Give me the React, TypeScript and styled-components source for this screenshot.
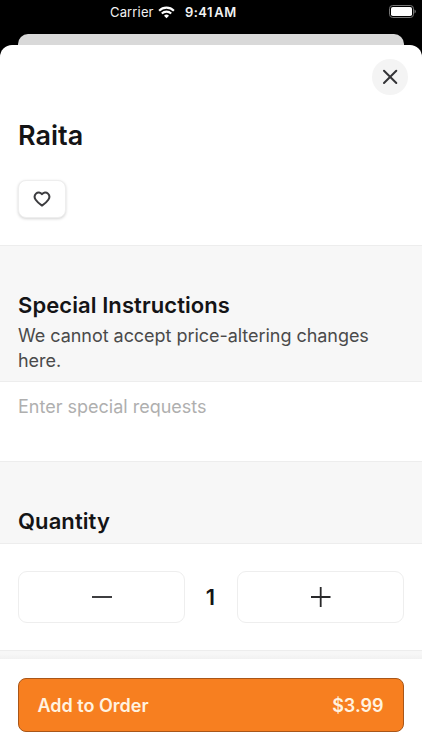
import React from "react";
import styled, { createGlobalStyle } from "styled-components";

const GlobalStyle = createGlobalStyle`
  * { box-sizing: border-box; }
  body {
    margin: 0;
    background: #000;
    font-family: Inter, "Liberation Sans", sans-serif;
    color: #141416;
  }
  button { font: inherit; color: inherit; margin: 0; padding: 0; }
  svg { display: block; flex: none; }
  h1, h2, p { margin: 0; }
`;

const Screen = styled.div`
  width: 422px;
  height: 750px;
  display: flex;
  flex-direction: column;
  background: #000;
  overflow: hidden;
`;

const StatusBar = styled.header`
  height: 34px;
  flex: none;
  display: flex;
  justify-content: space-between;
  padding: 4px 6px 0 110px;
  color: #f2f2f2;
  font-size: 13px;
  line-height: 16px;
`;

const StatusGroup = styled.div`
  display: flex;
  height: 16px;
  align-items: center;
`;

const Carrier = styled.span`
  width: 48px;
  letter-spacing: 0.15px;
  white-space: nowrap;
`;

const Clock = styled.span`
  margin-left: 10px;
  font-weight: 600;
  letter-spacing: 0.45px;
  word-spacing: -2.5px;
  white-space: nowrap;
`;

const PreviousSheet = styled.div`
  height: 11px;
  flex: none;
  margin: 0 18px;
  background: #d9d9d9;
  border-radius: 10px 10px 0 0;
`;

const Sheet = styled.main`
  flex: 1;
  display: flex;
  flex-direction: column;
  background: #fff;
  border-radius: 12px 12px 0 0;
`;

const Intro = styled.section`
  height: 200px;
  padding: 14px 14px 0 18px;
`;

const CloseButton = styled.button`
  display: flex;
  width: 36px;
  height: 36px;
  margin-left: auto;
  align-items: center;
  justify-content: center;
  border: 0;
  border-radius: 50%;
  background: #f4f4f4;
`;

const Title = styled.h1`
  margin-top: 24px;
  font-size: 27px;
  line-height: 34px;
  font-weight: 600;
`;

const FavoriteButton = styled.button`
  display: flex;
  width: 48px;
  height: 38px;
  margin-top: 27px;
  align-items: center;
  justify-content: center;
  border: 1px solid #eee;
  border-radius: 8px;
  background: #fff;
  box-shadow: 0 1px 3px rgba(0, 0, 0, 0.17);
`;

const SectionHeader = styled.div<{ $height: number }>`
  height: ${(p) => p.$height}px;
  padding: 45px 18px 0;
  background: #f7f7f7;
  border-top: 1px solid #ededed;
  border-bottom: 1px solid #ededed;
`;

const SectionTitle = styled.h2`
  font-size: 22px;
  line-height: 28px;
  font-weight: 600;
  letter-spacing: 0.08px;
  white-space: nowrap;
`;

const Description = styled.p`
  margin-top: 4px;
  color: #4a4a4a;
  font-size: 18px;
  line-height: 25px;
  letter-spacing: -0.04px;
`;

const RequestInput = styled.textarea`
  display: block;
  width: 100%;
  height: 79px;
  padding: 13px 18px;
  border: 0;
  outline: 0;
  resize: none;
  background: #fff;
  font: 18px/24px Inter, "Liberation Sans", sans-serif;
  &::placeholder { color: #afafaf; opacity: 1; }
`;

const QuantityRow = styled.div`
  height: 106px;
  display: grid;
  grid-template-columns: 167px 1fr 167px;
  padding: 27px 18px 0;
`;

const StepButton = styled.button`
  display: flex;
  height: 52px;
  align-items: center;
  justify-content: center;
  border: 1px solid #eee;
  border-radius: 9px;
  background: #fff;
`;

const Count = styled.span`
  height: 52px;
  padding-right: 1px;
  font-size: 22px;
  line-height: 52px;
  font-weight: 600;
  text-align: center;
`;

const Divider = styled.div`
  height: 9px;
  border-top: 1px solid #ededed;
  background: linear-gradient(#f7f7f7 35%, #f1f1f1);
`;

const Footer = styled.footer`
  flex: 1;
  padding: 19px 18px 0;
`;

const OrderButton = styled.button`
  display: flex;
  width: 100%;
  height: 54px;
  padding: 0 19.5px 0 18.5px;
  align-items: center;
  justify-content: space-between;
  border: 1px solid #a95618;
  border-radius: 8px;
  background: #f77f20;
  color: #fff3e0;
  font-size: 18px;
  font-weight: 600;
`;

const WifiIcon = () => (
  <svg width="17" height="13" viewBox="0 0 17 13" fill="none" stroke="#fff" strokeWidth="2.1">
    <path d="M1.1 4.7a10.4 10.4 0 0 1 14.8 0" />
    <path d="M3.8 7.6a6.6 6.6 0 0 1 9.4 0" />
    <path d="M8.5 12.2 6 9.7a3.6 3.6 0 0 1 5 0Z" fill="#fff" stroke="none" />
  </svg>
);

const BatteryIcon = () => (
  <svg width="28" height="14" viewBox="0 0 28 14" fill="none">
    <rect x="1.5" y="0.500" width="24" height="12" rx="3.2" stroke="#777" />
    <rect x="3" y="2" width="21" height="9" rx="1.8" fill="#fff" />
    <path d="M26.5 4.500v4q1.3-.6 1.3-2t-1.3-2" fill="#777" />
  </svg>
);

const CloseIcon = () => (
  <svg width="16" height="16" viewBox="0 0 16 16" stroke="#343437" strokeWidth="2" strokeLinecap="round">
    <path d="m2 1.700 12.300 12.300M14.300 1.700 2 14" />
  </svg>
);

const HeartIcon = () => (
  <svg width="18" height="16" viewBox="0 0 18 16" fill="none" stroke="#3c3c3f" strokeWidth="2" strokeLinejoin="round">
    <path d="M9 3.2C7.5 1 4.7.9 3 2.6 1.300 4.300 1.300 6.700 2.700 8.700 4.200 10.900 6.800 13.100 9 14.600c2.200-1.500 4.800-3.700 6.300-5.900 1.400-2 1.400-4.400-.3-6.100C13.300.900 10.500 1 9 3.200Z" />
  </svg>
);

const StepIcon = ({ plus = false }: { plus?: boolean }) => (
  <svg width="20" height="20" viewBox="0 0 20 20" stroke="#29292b" strokeWidth="1.8">
    <path d={plus ? "M0 10h19.500M9.700 0v20" : "M0 10h20"} />
  </svg>
);

export default function App() {
  return (
    <>
      <GlobalStyle />
      <Screen>
        <StatusBar>
          <StatusGroup>
            <Carrier>Carrier</Carrier>
            <WifiIcon />
            <Clock>9:41 AM</Clock>
          </StatusGroup>
          <StatusGroup>
            <BatteryIcon />
          </StatusGroup>
        </StatusBar>
        <PreviousSheet />
        <Sheet>
          <Intro>
            <CloseButton aria-label="Close"><CloseIcon /></CloseButton>
            <Title>Raita</Title>
            <FavoriteButton aria-label="Favorite"><HeartIcon /></FavoriteButton>
          </Intro>
          <SectionHeader $height={137}>
            <SectionTitle>Special Instructions</SectionTitle>
            <Description>We cannot accept price-altering changes here.</Description>
          </SectionHeader>
          <RequestInput placeholder="Enter special requests" />
          <SectionHeader $height={83}>
            <SectionTitle>Quantity</SectionTitle>
          </SectionHeader>
          <QuantityRow>
            <StepButton aria-label="Decrease quantity"><StepIcon /></StepButton>
            <Count>1</Count>
            <StepButton aria-label="Increase quantity"><StepIcon plus /></StepButton>
          </QuantityRow>
          <Divider />
          <Footer>
            <OrderButton>
              <span>Add to Order</span>
              <span>$3.99</span>
            </OrderButton>
          </Footer>
        </Sheet>
      </Screen>
    </>
  );
}
